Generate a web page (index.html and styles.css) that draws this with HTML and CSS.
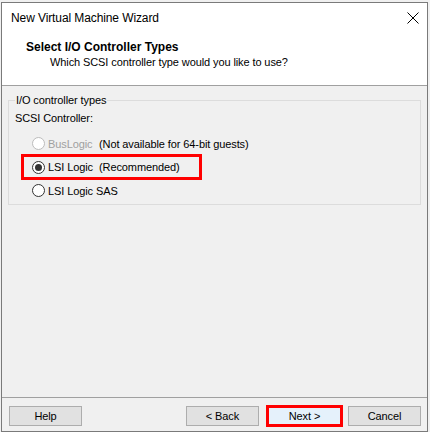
FILE: index.html
```html
<!DOCTYPE html>
<html>
<head>
<meta charset="utf-8">
<link rel="stylesheet" href="styles.css">
</head>
<body>
<div class="window">
  <div class="titlebar">
    <span class="title">New Virtual Machine Wizard</span>
    <svg class="close" width="12" height="12" viewBox="0 0 12 12"><path d="M0.5 0.5 L11.5 11.5 M11.5 0.5 L0.5 11.5" stroke="#000" stroke-width="1" fill="none"/></svg>
  </div>
  <div class="header">
    <div class="h-title">Select I/O Controller Types</div>
    <div class="h-sub">Which SCSI controller type would you like to use?</div>
  </div>
  <div class="content">
    <fieldset class="group">
      <legend>I/O controller types</legend>
      <div class="label">SCSI Controller:</div>
      <div class="radio-row disabled">
        <span class="radio"></span><span class="opt">BusLogic</span><span class="note">(Not available for 64-bit guests)</span>
      </div>
      <div class="radio-row marked">
        <span class="radio checked"></span><span class="opt">LSI Logic</span><span class="note">(Recommended)</span>
      </div>
      <div class="radio-row">
        <span class="radio"></span><span class="opt">LSI Logic SAS</span>
      </div>
    </fieldset>
  </div>
  <div class="footer">
    <button class="btn">Help</button>
    <button class="btn btn-back">&lt; Back</button>
    <button class="btn btn-next">Next &gt;</button>
    <button class="btn btn-cancel">Cancel</button>
  </div>
</div>
</body>
</html>
```

FILE: styles.css
```css
html, body {
  margin: 0;
  padding: 0;
  background: #f0f0f0;
}
body {
  font-family: "Liberation Sans", Arial, sans-serif;
  font-size: 11px;
  letter-spacing: -0.1px;
  color: #000;
}
.window {
  margin: 2px 0 0 1px;
  width: 427px;
  height: 430px;
  box-sizing: border-box;
  border: 1px solid #7a7a7a;
  background: #f0f0f0;
  display: flex;
  flex-direction: column;
}
.titlebar {
  height: 30px;
  background: #fff;
  display: flex;
  align-items: center;
  justify-content: space-between;
  padding: 0 8px 0 9px;
}
.title {
  font-size: 12px;
  letter-spacing: -0.1px;
  line-height: 16px;
  margin-top: -1px;
}
.close {
  display: block;
}
.header {
  height: 53px;
  box-sizing: border-box;
  background: #fff;
  border-bottom: 1px solid #a0a0a0;
  padding: 7px 0 0 24px;
}
.h-title {
  font-weight: bold;
  font-size: 12px;
  letter-spacing: 0;
  line-height: 15px;
}
.h-sub {
  line-height: 15px;
  padding-left: 24px;
}
.content {
  flex: 1;
  padding: 7px 6px 0 6px;
}
.group {
  margin: 0;
  padding: 4px 6px 1px 6px;
  border: 1px solid #dcdcdc;
}
.group legend {
  padding: 0 1px;
  line-height: 14px;
}
.label {
  line-height: 15px;
  margin-bottom: 6px;
}
.radio-row {
  height: 23.5px;
  display: flex;
  align-items: center;
  position: relative;
}
.radio {
  flex-shrink: 0;
  width: 13px;
  height: 13px;
  box-sizing: border-box;
  border: 1px solid #333;
  border-radius: 50%;
  background: #fff;
  margin-left: 17px;
  margin-right: 3px;
  display: flex;
  align-items: center;
  justify-content: center;
}
.radio.checked::after {
  content: "";
  width: 7px;
  height: 7px;
  border-radius: 50%;
  background: #333;
}
.opt {
  flex-shrink: 0;
  width: 51px;
  white-space: nowrap;
}
.note {
  white-space: nowrap;
}
.disabled .radio {
  border-color: #bcbcbc;
  background: #fff;
}
.disabled .opt {
  color: #a0a0a0;
}
.marked::after {
  content: "";
  position: absolute;
  left: 6px;
  top: -2px;
  width: 181px;
  height: 26px;
  box-sizing: border-box;
  border: 3px solid #ff0000;
}
.footer {
  height: 34px;
  box-sizing: border-box;
  border-top: 1px solid #a0a0a0;
  padding: 8px 6px 0 7px;
  display: flex;
  align-items: flex-start;
}
.btn {
  font-family: inherit;
  font-size: 11px;
  letter-spacing: -0.1px;
  color: #000;
  width: 73px;
  height: 20px;
  box-sizing: border-box;
  border: 1px solid #adadad;
  background: #e1e1e1;
  padding: 0;
  margin: 0;
  line-height: 16px;
}
.btn-back {
  margin-left: auto;
}
.btn-next {
  width: 77px;
  height: 22px;
  margin-top: -1px;
  margin-left: 7px;
  border: 3px solid #ff0000;
  background: #e5f1fb;
}
.btn-cancel {
  margin-left: 5px;
}
```
